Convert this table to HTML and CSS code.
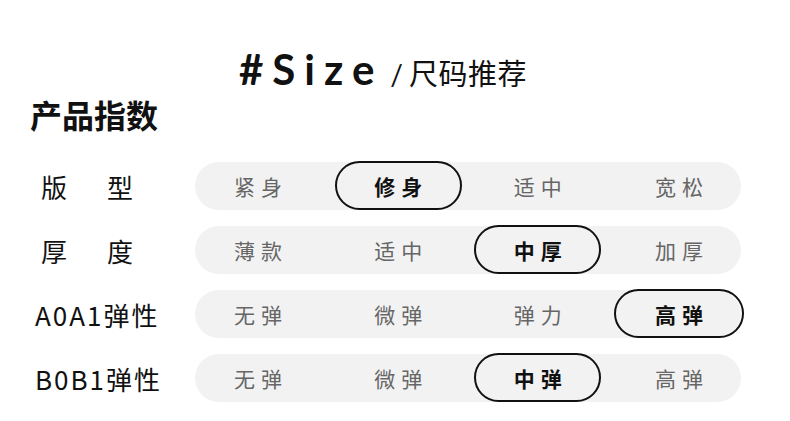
FILE: index.html
```html
<!DOCTYPE html>
<html lang="zh">
<head>
<meta charset="utf-8">
<title>Size</title>
<link rel="stylesheet" href="styles.css">
</head>
<body>
<div class="page">
  <div class="header">
    <span class="size">#Size</span>
    <span class="slash">/</span>
    <span class="sub">尺码推荐</span>
  </div>
  <h2 class="title">产品指数</h2>
  <div class="rows">
    <div class="row">
      <div class="label spread"><span>版</span><span>型</span></div>
      <div class="track">
        <div class="opt">紧身</div>
        <div class="opt on">修身</div>
        <div class="opt">适中</div>
        <div class="opt">宽松</div>
      </div>
    </div>
    <div class="row">
      <div class="label spread"><span>厚</span><span>度</span></div>
      <div class="track">
        <div class="opt">薄款</div>
        <div class="opt">适中</div>
        <div class="opt on">中厚</div>
        <div class="opt">加厚</div>
      </div>
    </div>
    <div class="row">
      <div class="label">A0A1弹性</div>
      <div class="track">
        <div class="opt">无弹</div>
        <div class="opt">微弹</div>
        <div class="opt">弹力</div>
        <div class="opt on">高弹</div>
      </div>
    </div>
    <div class="row">
      <div class="label">B0B1弹性</div>
      <div class="track">
        <div class="opt">无弹</div>
        <div class="opt">微弹</div>
        <div class="opt on">中弹</div>
        <div class="opt">高弹</div>
      </div>
    </div>
  </div>
</div>
</body>
</html>
```

FILE: styles.css
```css
* { box-sizing: border-box; }
html, body {
  margin: 0;
  padding: 0;
  background: #ffffff;
}
body {
  width: 790px;
  height: 421px;
  overflow: hidden;
  font-family: "Noto Sans CJK SC", "Noto Sans", sans-serif;
  color: #111111;
}
.page {
  padding-top: 44px;
}
.header {
  display: flex;
  align-items: baseline;
  padding-left: 239px;
  height: 50px;
}
.size {
  font-family: "Lato", "Open Sans", sans-serif;
  font-weight: 700;
  font-size: 42px;
  letter-spacing: 9px;
  line-height: 50px;
}
.slash {
  font-family: "Lato", sans-serif;
  font-size: 28px;
  margin-left: 7px;
  margin-right: 6px;
}
.sub {
  font-size: 29px;
  letter-spacing: 0.5px;
}
.title {
  margin: 0;
  padding-left: 30px;
  font-size: 32px;
  font-weight: 700;
  line-height: 40px;
  height: 40px;
}
.rows {
  margin-top: 28px;
  display: flex;
  flex-direction: column;
  gap: 16px;
}
.row {
  display: flex;
  align-items: center;
  height: 48px;
}
.label {
  width: 160px;
  margin-left: 35px;
  font-size: 26px;
  font-weight: 400;
  letter-spacing: 2px;
  color: #111;
}
.label.spread {
  display: flex;
  justify-content: space-between;
  width: 92px;
  margin-left: 41px;
  margin-right: 62px;
  letter-spacing: 0;
}
.track {
  width: 546px;
  height: 48px;
  border-radius: 24px;
  background: #f2f2f2;
  display: grid;
  grid-template-columns: repeat(4, 127px);
  justify-content: space-between;
  padding: 0;
}
.opt {
  height: 48px;
  display: flex;
  align-items: center;
  justify-content: center;
  font-size: 21px;
  letter-spacing: 6px;
  text-indent: 6px;
  color: #666666;
}
.opt:first-child { margin-left: -1px; }
.opt:last-child { margin-right: -3px; }
.opt.on {
  border: 2px solid #111111;
  border-radius: 25px;
  color: #111111;
  font-weight: 700;
  height: 49px;
  margin-top: -1px;
}
```
